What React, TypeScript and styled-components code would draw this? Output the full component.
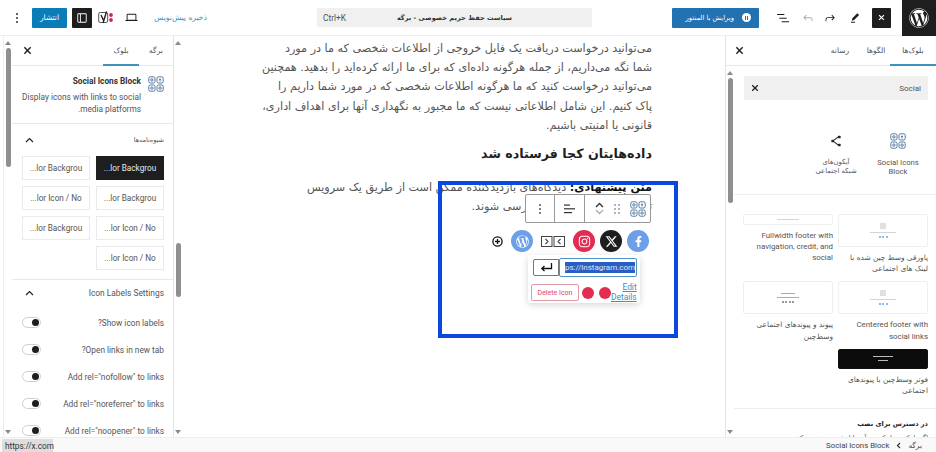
import React from "react";
import styled, { createGlobalStyle } from "styled-components";
import { FaFacebookF, FaInstagram, FaWordpress, FaWordpressSimple } from "react-icons/fa";
import { FaXTwitter } from "react-icons/fa6";

const Global = createGlobalStyle`
  html, body { margin: 0; padding: 0; background: #fff; }
  * { box-sizing: border-box; }
  body { font-family: Roboto, "DejaVu Sans", sans-serif; color: #444; }
`;
const Page = styled.div`width: 936px; height: 452px; overflow: hidden; display: flex; flex-direction: column; background: #fff; position: relative;`;

/* ---------- top bar ---------- */
const TopBar = styled.header`height: 36px; flex: none; display: flex; align-items: center; border-bottom: 1px solid #eee;`;
const IconSlot = styled.span<{ $w: number; $ml?: number; $c?: string }>`
  width: ${p => p.$w}px; margin-left: ${p => p.$ml ?? 0}px; color: ${p => p.$c ?? "#1e1e1e"};
  display: flex; align-items: center; justify-content: center; flex: none;
`;
const Publish = styled.button`
  width: 35px; height: 20px; margin-left: 9px; border: 0; padding: 0; border-radius: 1px; background: #0a7cb8; color: #fff;
  font: 400 7.5px "DejaVu Sans", sans-serif;
`;
const DarkToggle = styled.span<{ $ml: number; $w: number }>`
  width: ${p => p.$w}px; height: 20px; margin-left: ${p => p.$ml}px; background: #1e1e1e; color: #fff; border-radius: 1px; flex: none;
  display: flex; align-items: center; justify-content: center;
`;
const Draft = styled.span`width: 55px; margin-left: 14px; flex: none; font: 7.6px "DejaVu Sans", sans-serif; color: #3a97bd; text-align: center; white-space: nowrap;`;
const Command = styled.div`
  width: 275px; height: 19px; margin-left: 109px; background: #f0f0f0; border-radius: 1px; flex: none; padding: 0 6px;
  display: grid; grid-template-columns: 1fr auto 1fr; align-items: center; font-size: 8.4px; color: #555;
`;
const CommandTitle = styled.span`font: 700 6.6px "DejaVu Sans", sans-serif; color: #333; white-space: nowrap;`;
const Elementor = styled.button`
  width: 87px; height: 20px; margin-left: 80px; background: #2271b1; border: 0; border-radius: 1px; color: #fff; padding: 0 8px;
  display: flex; align-items: center; justify-content: flex-end; gap: 8px; font: 400 6.8px "DejaVu Sans", sans-serif; flex: none; white-space: nowrap;
`;
const ElementorDot = styled.span`width: 9px; height: 9px; border-radius: 50%; background: #fff; flex: none; display: flex; align-items: center; justify-content: center; gap: 1px; i { width: 1px; height: 4px; background: #2271b1; }`;
const WpTile = styled.span`width: 34px; height: 36px; margin-left: 11px; background: #1e1e1e; color: #fff; display: flex; align-items: center; justify-content: center; flex: none;`;

/* ---------- body ---------- */
const Body = styled.div`flex: 1; min-height: 0; display: flex; padding-left: 3px;`;
const LeftSide = styled.aside`width: 171px; flex: none; display: flex; border-left: 1px solid #eee; border-right: 1px solid #e4e4e4;`;
const RightSide = styled.aside`width: 211px; flex: none; display: flex; flex-direction: column; border-left: 1px solid #e4e4e4;`;
const Scroll = styled.div`width: 8px; flex: none; display: flex; flex-direction: column; align-items: center; padding: 5px 0 3px;`;
const ArrowUp = styled.i`width: 0; height: 0; border: 3px solid transparent; border-top: 0; border-bottom: 4px solid #8a8a8a; flex: none;`;
const ArrowDown = styled.i`width: 0; height: 0; border: 3px solid transparent; border-bottom: 0; border-top: 4px solid #8a8a8a; flex: none; margin-top: auto;`;
const Thumb = styled.i<{ $top: number; $h: number }>`width: 5px; height: ${p => p.$h}px; margin-top: ${p => p.$top}px; background: #8f8f8f; border-radius: 3px; flex: none;`;

const SideMain = styled.div`flex: 1; min-width: 0; display: flex; flex-direction: column; overflow: hidden;`;
const Tabs = styled.div`height: 30px; flex: none; display: flex; align-items: stretch; border-bottom: 1px solid #e8e8e8; font: 7.5px "DejaVu Sans", sans-serif; color: #555;`;
const Tab = styled.span<{ $on?: boolean; $w: number }>`
  width: ${p => p.$w}px; flex: none; display: flex; align-items: center; justify-content: center; white-space: nowrap; margin-bottom: -1px;
  border-bottom: 2px solid ${p => (p.$on ? "#3d92c0" : "transparent")};
`;
const CloseSlot = styled.span<{ $end: number }>`margin-right: auto; margin-left: ${p => p.$end}px; display: flex; align-items: center; color: #222;`;

const BlockCard = styled.section`height: 58px; flex: none; padding: 10px 9px 0; display: grid; grid-template-columns: 16px 1fr; column-gap: 7px; border-bottom: 1px solid #e8e8e8;`;
const BlockText = styled.div`font-size: 8.3px; line-height: 11.3px; color: #555; text-align: right;`;
const BlockTitle = styled.div`font-weight: 700; color: #333; font-size: 8.3px; margin-bottom: 5px;`;
const PanelHead = styled.div<{ $h: number; $pb?: number }>`height: ${p => p.$h}px; padding: 0 9px ${p => p.$pb ?? 0}px; flex: none; display: flex; align-items: center; justify-content: space-between; font-size: 8.4px; color: #555;`;
const PanelHeadFa = styled.span`font: 6.5px "DejaVu Sans", sans-serif;`;
const ChevSlot = styled.span`color: #222; display: flex; margin-left: 4px;`;
const StyleGrid = styled.div`flex: none; display: grid; grid-template-columns: 68px 68px; gap: 6px; padding: 0 9px 9px; border-bottom: 1px solid #e8e8e8; justify-content: start;`;
const StyleBtn = styled.div<{ $on?: boolean }>`
  height: 24px; display: flex; align-items: center; justify-content: center; font-size: 8.2px; white-space: nowrap; direction: ltr;
  border: 1px solid ${p => (p.$on ? "#1e1e1e" : "#eaeaea")}; background: ${p => (p.$on ? "#1e1e1e" : "#fff")}; color: ${p => (p.$on ? "#e8e8e8" : "#555")};
`;
const ToggleRow = styled.div`height: 27px; flex: none; display: flex; align-items: center; justify-content: space-between; padding: 0 9px; font-size: 8.3px; color: #555; white-space: nowrap;`;
const Toggle = styled.span`width: 19px; height: 11px; border: 1px solid #cfcfcf; border-radius: 6px; background: #fff; display: flex; align-items: center; justify-content: flex-end; padding: 0 1px; direction: ltr; margin-left: 1px;`;
const Knob = styled.i`width: 7px; height: 7px; border-radius: 50%; background: #1e1e1e;`;

/* ---------- canvas ---------- */
const Canvas = styled.main`flex: 1; min-width: 0; display: flex; position: relative; overflow: hidden;`;
const Doc = styled.article`flex: 1; padding: 3px 73px 0 0; display: flex; flex-direction: column; align-items: flex-start; color: #555; font-family: "DejaVu Sans", sans-serif;`;
const Para = styled.p`margin: 0; font-size: 11.2px; line-height: 19.2px; white-space: nowrap; text-align: right;`;
const Heading = styled.h2`margin: 8px 0 13px; font: 700 12.7px/22px "DejaVu Sans", sans-serif; color: #1e1e1e; white-space: nowrap;`;
const Strong = styled.b`color: #111;`;
const Frame = styled.div`
  position: absolute; left: 264px; top: 145px; width: 240px; height: 157px; border: 4px solid #0a48e0;
  display: flex; flex-direction: column; align-items: flex-end; padding: 9px 23px 0 0;
`;
const BlockBar = styled.div`display: flex; height: 29px; width: 126px; background: #fff; border: 1px solid #999; border-radius: 2px; flex: none;`;
const BarCell = styled.span<{ $w: number; $line?: boolean; $pl?: number }>`
  width: ${p => p.$w}px; padding-left: ${p => p.$pl ?? 0}px; flex: none; display: flex; align-items: center; justify-content: center; gap: 10px;
  ${p => (p.$line ? "border-right: 1px solid #999;" : "")} color: #444;
`;
const Mover = styled.span`display: flex; flex-direction: column; align-items: center; gap: 1px; color: #333;`;
const SocialRow = styled.div`display: flex; align-items: center; height: 24px; margin: 6px 2px 2px 0; flex: none;`;
const Social = styled.span<{ $bg: string; $ml?: number }>`
  width: 22px; height: 22px; border-radius: 50%; background: ${p => p.$bg}; color: #fff; flex: none; margin-right: ${p => p.$ml ?? 0}px;
  display: flex; align-items: center; justify-content: center;
`;
const PlugSlot = styled.span`display: flex; margin-right: 8px; flex: none;`;
const AddSlot = styled.span`display: flex; margin-right: 8px; color: #111; flex: none;`;
const Popover = styled.div`
  width: 112px; height: 48px; margin-right: 11px; background: #fff; border-radius: 2px; box-shadow: 0 2px 7px rgba(0,0,0,.16); flex: none;
  display: flex; flex-direction: column; padding: 3px; gap: 6px;
`;
const LinkRow = styled.div`display: flex; align-items: center;`;
const EnterBtn = styled.span`width: 26px; height: 17px; margin-left: 2px; border: 1px solid #777; border-radius: 2px 0 0 2px; display: flex; align-items: center; justify-content: center; color: #111; flex: none;`;
const UrlBox = styled.span`width: 78px; height: 19px; border: 1px solid #4d94c4; border-radius: 2px; font-size: 8px; padding: 0 5px; display: flex; align-items: center; flex: none; overflow: hidden;`;
const UrlSel = styled.span`background: #2a5ec4; color: #dfe8f7; white-space: nowrap; line-height: 11px;`;
const ActionRow = styled.div`display: flex; align-items: center;`;
const DeleteBtn = styled.span`width: 48px; height: 17px; border: 1px solid #e09aa5; border-radius: 2px; color: #d8485f; font-size: 7px; display: flex; align-items: center; justify-content: center; white-space: nowrap; flex: none;`;
const Dot = styled.i<{ $ml: number }>`width: 12px; height: 12px; border-radius: 50%; background: #e22c52; margin-left: ${p => p.$ml}px; flex: none;`;
const Links = styled.span`margin-left: auto; margin-right: 1px; text-align: right; font-size: 8.4px; line-height: 9.6px; color: #3a8fc4; text-decoration: underline;`;

/* ---------- inserter ---------- */
const InserterBody = styled.div`flex: 1; min-height: 0; display: flex;`;
const InserterMain = styled.div`flex: 1; min-width: 0; display: flex; flex-direction: column; overflow: hidden;`;
const Search = styled.div`height: 24px; margin: 10px 8px 0 10px; flex: none; background: #f0f0f0; display: flex; align-items: center; justify-content: space-between; padding: 0 7px; font-size: 8px; color: #555;`;
const BlockItems = styled.div`height: 95px; flex: none; display: flex; padding: 33px 7px 0 0; border-bottom: 1px solid #eee;`;
const BlockItem = styled.div`width: 62px; display: flex; flex-direction: column; align-items: center; font-size: 7.7px; line-height: 9.2px; color: #555; text-align: center;`;
const BlockItemFa = styled.span`font: 6.8px/9.2px "DejaVu Sans", sans-serif;`;
const BlockItemIcon = styled.span`height: 16px; margin-bottom: 9px; display: flex; color: #222;`;
const PatternGrid = styled.div`flex: none; padding: 19px 8px 12px 10px; display: grid; grid-template-columns: 90px 90px; column-gap: 5px; row-gap: 7px; align-items: start; border-bottom: 1px solid #eee;`;
const Pattern = styled.div`display: flex; flex-direction: column; gap: 5px;`;
const Thumbnail = styled.div<{ $h: number; $dark?: boolean }>`
  height: ${p => p.$h}px; border: 1px solid ${p => (p.$dark ? "#111" : "#efefef")}; background: ${p => (p.$dark ? "#0c0c0c" : "#fff")}; border-radius: 2px;
  display: flex; flex-direction: column; align-items: center; justify-content: center; gap: 3px;
`;
const MiniSquare = styled.i`width: 6px; height: 6px; background: #e0e0e0;`;
const MiniLine = styled.i<{ $w: number; $c?: string }>`width: ${p => p.$w}px; height: 1px; background: ${p => p.$c ?? "#d4d4d4"};`;
const MiniDots = styled.span<{ $c: string }>`display: flex; gap: 1.5px; i { width: 2px; height: 2px; border-radius: 50%; background: ${p => p.$c}; }`;
const Caption = styled.div<{ $fa?: boolean }>`
  font-family: ${p => (p.$fa ? '"DejaVu Sans", sans-serif' : "Roboto, sans-serif")}; font-size: ${p => (p.$fa ? 7.4 : 7.9)}px; line-height: 11.2px; color: #555; text-align: right;
`;
const Available = styled.div`flex: none; padding: 10px 8px 0 0; font: 700 6.6px/11px "DejaVu Sans", sans-serif; color: #222;`;
const AvailableText = styled.div`flex: none; padding: 3px 8px 0 0; font: 6.6px/11px "DejaVu Sans", sans-serif; color: #555; white-space: nowrap;`;

/* ---------- footer ---------- */
const Footer = styled.footer`height: 15px; flex: none; border-top: 1px solid #eee; background: #f9f9f9; display: flex; align-items: center; gap: 7px; padding-right: 14px; font-size: 7.8px; color: #444;`;
const FooterFa = styled.span`font: 7.4px "DejaVu Sans", sans-serif;`;
const StatusTip = styled.div`position: absolute; left: 2px; bottom: 0; height: 13px; width: 51px; background: #dedede; color: #333; font-size: 8.2px; display: flex; align-items: center; padding-left: 3px;`;

/* ---------- icons ---------- */
const Wp = ({ d, s = 12, c = "currentColor" }: { d: string; s?: number; c?: string }) => (
  <svg width={s} height={s} viewBox="0 0 24 24" fill={c}><path d={d} /></svg>
);
const I = {
  list: "M3 6h11v1.5H3V6Zm3.5 5.5h11V13h-11v-1.5ZM21 17H10v1.5h11V17Z",
  undo: "M18.3 11.7c-.6-.6-1.4-.9-2.3-.9H6.7l2.9-3.3-1.1-1-4.5 5L8.5 16l1-1-2.7-2.7H16c.5 0 .9.2 1.3.5 1 1 1 3.4 1 4.5v.3h1.5v-.2c0-1.5 0-4.3-1.5-5.7z",
  redo: "M15.6 6.5l-1.1 1 2.9 3.3H8c-.9 0-1.7.3-2.3.9-1.4 1.5-1.4 4.2-1.4 5.6v.2h1.5v-.3c0-1.1 0-3.5 1-4.5.3-.3.7-.5 1.3-.5h9.2L14.5 15l1.1 1.1 4.6-4.6-4.6-5z",
  pen: "m19 7-3-3-8.5 8.5-1 4 4-1L19 7Zm-7 11.5H5V20h7v-1.5Z",
  drawer: "M18 4H6c-1.1 0-2 .9-2 2v12c0 1.1.9 2 2 2h12c1.1 0 2-.9 2-2V6c0-1.1-.9-2-2-2zM8.5 18.5H6c-.3 0-.5-.2-.5-.5V6c0-.3.2-.5.5-.5h2.5v13zm10-.5c0 .3-.2.5-.5.5h-8v-13h8c.3 0 .5.2.5.5v12z",
  laptop: "M20.5 16h-.7V8c0-1.1-.9-2-2-2H6.2c-1.1 0-2 .9-2 2v8h-.7c-.8 0-1.5.7-1.5 1.5h20c0-.8-.7-1.5-1.5-1.5zM5.7 8c0-.3.2-.5.5-.5h11.6c.3 0 .5.2.5.5v7.6H5.7V8z",
  share: "M9 11.8l6.1-4.5c.1.4.4.7.9.7h2c.6 0 1-.4 1-1V5c0-.6-.4-1-1-1h-2c-.6 0-1 .4-1 1v.4l-6.4 4.8c-.2-.1-.4-.2-.6-.2H6c-.6 0-1 .4-1 1v2c0 .6.4 1 1 1h2c.2 0 .4-.1.6-.2l6.4 4.8v.4c0 .6.4 1 1 1h2c.6 0 1-.4 1-1v-2c0-.6-.4-1-1-1h-2c-.5 0-.8.3-.9.7L9 12.2v-.4z",
};
const Close = ({ s = 9, c = "currentColor" }: { s?: number; c?: string }) => (
  <svg width={s} height={s} viewBox="0 0 10 10" stroke={c} strokeWidth="1.6" fill="none"><path d="M1.5 1.5l7 7M8.5 1.5l-7 7" /></svg>
);
const Chev = () => (<svg width="9" height="6" viewBox="0 0 9 6" fill="none" stroke="currentColor" strokeWidth="1.2"><path d="M1 5l3.5-3.5L8 5" /></svg>);
const Dots = ({ c = "#555" }: { c?: string }) => (
  <svg width="4" height="12" viewBox="0 0 4 12" fill={c}><circle cx="2" cy="2" r="1" /><circle cx="2" cy="6" r="1" /><circle cx="2" cy="10" r="1" /></svg>
);
const SocialBlockIcon = ({ s = 16 }: { s?: number }) => (
  <svg width={s} height={s} viewBox="0 0 16 16" fill="none" stroke="#55789f" strokeWidth="1">
    <rect x=".8" y=".8" width="6.2" height="6.2" rx="1.5" /><rect x="9" y=".8" width="6.2" height="6.2" rx="1.5" />
    <rect x=".8" y="9" width="6.2" height="6.2" rx="1.5" /><rect x="9" y="9" width="6.2" height="6.2" rx="1.5" />
    <circle cx="3.9" cy="3.9" r="1.2" /><path d="M12 2.6v2.8M11 3.6h2" /><circle cx="3.9" cy="12.1" r="1.2" /><circle cx="12.1" cy="12.1" r="1.2" />
  </svg>
);
const Yoast = () => (
  <svg width="17" height="13" viewBox="0 0 17 13" fill="none">
    <rect x=".7" y="1.5" width="9" height="10" rx="1.5" stroke="#555" strokeWidth="1" />
    <path d="M3 4l2.3 5M8.6 .5L5 12" stroke="#222" strokeWidth="1.4" />
    <circle cx="13" cy="4" r="1.9" fill="#d0274f" /><circle cx="13" cy="9" r="1.9" fill="#d0274f" />
  </svg>
);
const Grip = () => (
  <svg width="6" height="10" viewBox="0 0 6 10" fill="#555"><circle cx="1" cy="1" r=".8" /><circle cx="5" cy="1" r=".8" /><circle cx="1" cy="5" r=".8" /><circle cx="5" cy="5" r=".8" /><circle cx="1" cy="9" r=".8" /><circle cx="5" cy="9" r=".8" /></svg>
);
const Align = () => (
  <svg width="11" height="10" viewBox="0 0 11 10" fill="#333"><rect width="6" height="1.2" x="0" y="0.5" /><rect width="11" height="1.2" x="0" y="4.2" /><rect width="8" height="1.2" x="0" y="8" /></svg>
);
const Plug = () => (
  <svg width="24" height="11" viewBox="0 0 24 11" fill="none" stroke="#444" strokeWidth="1">
    <rect x=".5" y=".5" width="10.5" height="10" /><rect x="13" y=".5" width="10.5" height="10" />
    <path d="M4.5 3l2.5 2.5L4.5 8M19.5 3L17 5.5L19.5 8" strokeWidth="1.1" />
  </svg>
);
const Add = () => (
  <svg width="11" height="11" viewBox="0 0 11 11" fill="none" stroke="currentColor" strokeWidth="1.3">
    <circle cx="5.5" cy="5.5" r="4.6" /><path d="M3 5.5h5M5.5 3v5" />
  </svg>
);
const Enter = () => (
  <svg width="13" height="9" viewBox="0 0 13 9" fill="none" stroke="currentColor" strokeWidth="1.3"><path d="M11.5 0v5.5H2M4.5 3L1.8 5.5L4.5 8" /></svg>
);

const styleButtons = [
  ["...lor Backgrou", true], ["...lor Backgrou", false],
  ["...lor Backgrou", false], ["...lor Icon / No", false],
  ["...lor Icon / No", false], ["...lor Backgrou", false],
  ["...lor Icon / No", false],
] as const;
const toggles = ["Show icon labels?", "Open links in new tab?", 'Add rel="nofollow" to links', 'Add rel="noreferrer" to links', 'Add rel="noopener" to links'];

export default function App() {
  return (
    <Page>
      <Global />
      <TopBar>
        <IconSlot $w={12} $ml={11}><Dots c="#333" /></IconSlot>
        <Publish>انتشار</Publish>
        <DarkToggle $ml={5} $w={20}><Wp d={I.drawer} s={14} /></DarkToggle>
        <IconSlot $w={17} $ml={6}><Yoast /></IconSlot>
        <IconSlot $w={15} $ml={9}><Wp d={I.laptop} s={15} /></IconSlot>
        <Draft>ذخیره پیش‌نویس</Draft>
        <Command>
          <span>Ctrl+K</span>
          <CommandTitle>سیاست حفظ حریم خصوصی - برگه</CommandTitle>
          <span />
        </Command>
        <Elementor>
          <span>ویرایش با المنتور</span>
          <ElementorDot><i /><i /></ElementorDot>
        </Elementor>
        <IconSlot $w={16} $ml={16}><Wp d={I.list} s={16} /></IconSlot>
        <IconSlot $w={14} $ml={10} $c="#aaa"><Wp d={I.undo} s={14} /></IconSlot>
        <IconSlot $w={14} $ml={8}><Wp d={I.redo} s={14} /></IconSlot>
        <IconSlot $w={14} $ml={11}><Wp d={I.pen} s={14} /></IconSlot>
        <DarkToggle $ml={10} $w={19}><Close s={7} /></DarkToggle>
        <WpTile><FaWordpress size={20} /></WpTile>
      </TopBar>

      <Body>
        <LeftSide>
          <Scroll><ArrowUp /><Thumb $top={3} $h={119} /><ArrowDown /></Scroll>
          <SideMain dir="rtl">
            <Tabs>
              <Tab $w={34}>برگه</Tab>
              <Tab $on $w={36}>بلوک</Tab>
              <CloseSlot $end={11}><Close /></CloseSlot>
            </Tabs>
            <BlockCard>
              <SocialBlockIcon />
              <BlockText>
                <BlockTitle>Social Icons Block</BlockTitle>
                Display icons with links to social media platforms.
              </BlockText>
            </BlockCard>
            <PanelHead $h={32}><PanelHeadFa>شیوه‌نامه‌ها</PanelHeadFa><ChevSlot><Chev /></ChevSlot></PanelHead>
            <StyleGrid>
              {styleButtons.map(([t, on], i) => <StyleBtn key={i} $on={on}>{t}</StyleBtn>)}
            </StyleGrid>
            <PanelHead $h={29} $pb={3}>Icon Labels Settings<ChevSlot><Chev /></ChevSlot></PanelHead>
            {toggles.map(t => <ToggleRow key={t}><span>{t}</span><Toggle><Knob /></Toggle></ToggleRow>)}
          </SideMain>
        </LeftSide>

        <Canvas>
          <Scroll><ArrowUp /><Thumb $top={198} $h={54} /><ArrowDown /></Scroll>
          <Doc dir="rtl">
            <Para>می‌توانید درخواست دریافت یک فایل خروجی از اطلاعات شخصی که ما در مورد</Para>
            <Para>شما نگه می‌داریم، از جمله هرگونه داده‌ای که برای ما ارائه کرده‌اید را بدهید. همچنین</Para>
            <Para>می‌توانید درخواست کنید که ما هرگونه اطلاعات شخصی که در مورد شما داریم را</Para>
            <Para>پاک کنیم. این شامل اطلاعاتی نیست که ما مجبور به نگهداری آنها برای اهداف اداری،</Para>
            <Para>قانونی یا امنیتی باشیم.</Para>
            <Heading>داده‌هایتان کجا فرستاده شد</Heading>
            <Para><Strong>متن پیشنهادی:</Strong> دیدگاه‌های بازدیدکننده ممکن است از طریق یک سرویس</Para>
            <Para>تشخیص هرزنامه خودکار بررسی شوند.</Para>
          </Doc>
          <Frame>
            <BlockBar>
              <BarCell $w={29} $line><Dots /></BarCell>
              <BarCell $w={30} $line><Align /></BarCell>
              <BarCell $w={65} $pl={5}>
                <Mover>
                  <svg width="9" height="6" viewBox="0 0 9 6" fill="none" stroke="#333" strokeWidth="1.3"><path d="M1 5l3.5-3.5L8 5" /></svg>
                  <svg width="9" height="6" viewBox="0 0 9 6" fill="none" stroke="#aaa" strokeWidth="1.3"><path d="M1 1l3.5 3.5L8 1" /></svg>
                </Mover>
                <Grip />
                <SocialBlockIcon />
              </BarCell>
            </BlockBar>
            <SocialRow dir="rtl">
              <Social $bg="#6d9fe8"><FaFacebookF size={11} /></Social>
              <Social $bg="#1e1e1e" $ml={5}><FaXTwitter size={13} /></Social>
              <Social $bg="#e22c52" $ml={5}><FaInstagram size={13} /></Social>
              <PlugSlot><Plug /></PlugSlot>
              <Social $bg="#6d9fe8" $ml={8}><FaWordpressSimple size={13} /></Social>
              <AddSlot><Add /></AddSlot>
            </SocialRow>
            <Popover>
              <LinkRow>
                <EnterBtn><Enter /></EnterBtn>
                <UrlBox><UrlSel>ps://instagram.com</UrlSel></UrlBox>
              </LinkRow>
              <ActionRow>
                <DeleteBtn>Delete Icon</DeleteBtn>
                <Dot $ml={3} />
                <Dot $ml={5} />
                <Links>Edit<br />Details</Links>
              </ActionRow>
            </Popover>
          </Frame>
        </Canvas>

        <RightSide dir="rtl">
          <Tabs>
            <Tab $on $w={46}>بلوک‌ها</Tab>
            <Tab $w={28}>الگوها</Tab>
            <Tab $w={44}>رسانه</Tab>
            <CloseSlot $end={9}><Close /></CloseSlot>
          </Tabs>
          <InserterBody>
            <InserterMain>
              <Search><span dir="ltr">Social</span><Close s={8} c="#222" /></Search>
              <BlockItems>
                <BlockItem><BlockItemIcon><SocialBlockIcon /></BlockItemIcon>Social Icons<br />Block</BlockItem>
                <BlockItem><BlockItemIcon><Wp d={I.share} s={16} /></BlockItemIcon><BlockItemFa>آیکون‌های<br />شبکه اجتماعی</BlockItemFa></BlockItem>
              </BlockItems>
              <PatternGrid>
                <Pattern>
                  <Thumbnail $h={33}><MiniSquare /><MiniLine $w={26} /><MiniDots $c="#6d9fe8"><i /><i /><i /></MiniDots></Thumbnail>
                  <Caption $fa>پاورقی وسط چین شده با لینک های اجتماعی</Caption>
                </Pattern>
                <Pattern>
                  <Thumbnail $h={11}><MiniLine $w={22} /></Thumbnail>
                  <Caption>Fullwidth footer with navigation, credit, and social</Caption>
                </Pattern>
                <Pattern>
                  <Thumbnail $h={33}><MiniSquare /><MiniLine $w={26} /><MiniDots $c="#6d9fe8"><i /><i /><i /></MiniDots></Thumbnail>
                  <Caption>Centered footer with social links</Caption>
                </Pattern>
                <Pattern>
                  <Thumbnail $h={33}><MiniLine $w={14} $c="#aaa" /><MiniLine $w={22} $c="#aaa" /><MiniDots $c="#777"><i /><i /><i /><i /></MiniDots></Thumbnail>
                  <Caption $fa>پیوند و پیوندهای اجتماعی وسط‌چین</Caption>
                </Pattern>
                <Pattern>
                  <Thumbnail $h={20} $dark><MiniLine $w={20} $c="#bbb" /><MiniLine $w={10} $c="#bbb" /></Thumbnail>
                  <Caption $fa>فوتر وسط‌چین با پیوندهای اجتماعی</Caption>
                </Pattern>
              </PatternGrid>
              <Available>در دسترس برای نصب</Available>
              <AvailableText>اگر بلوکی پیدا نکردید، آن را از فهرست نصب کنید.</AvailableText>
            </InserterMain>
            <Scroll><ArrowUp /><Thumb $top={3} $h={125} /><ArrowDown /></Scroll>
          </InserterBody>
        </RightSide>
      </Body>

      <Footer dir="rtl">
        <FooterFa>برگه</FooterFa>
        <svg width="5" height="7" viewBox="0 0 5 7" fill="none" stroke="#333" strokeWidth="1.2"><path d="M4 1L1.5 3.5L4 6" /></svg>
        <span>Social Icons Block</span>
      </Footer>
      <StatusTip>https://x.com</StatusTip>
    </Page>
  );
}
